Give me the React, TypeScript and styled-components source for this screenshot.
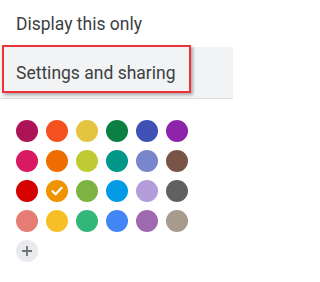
import React from 'react';
import styled, { createGlobalStyle } from 'styled-components';

const GlobalStyle = createGlobalStyle`
  body {
    margin: 0;
    background: #fff;
    font-family: Roboto, "Liberation Sans", Arial, sans-serif;
  }
`;

const Menu = styled.div`
  width: 233px;
  height: 282px;
  background: #fff;
  overflow: hidden;
`;

const MenuItem = styled.div<{ $active?: boolean; $height: number }>`
  position: relative;
  display: flex;
  align-items: center;
  height: ${(p) => p.$height}px;
  padding-left: 16px;
  font-size: 17.5px;
  color: #3c4043;
  background: ${(p) => (p.$active ? '#f1f3f4' : 'transparent')};
`;

const Callout = styled.div`
  position: absolute;
  left: 2px;
  top: -2px;
  width: 185px;
  height: 44px;
  border: 2px solid #ee3338;
  box-shadow: 2px 2px 3px rgba(0, 0, 0, 0.3);
  pointer-events: none;
`;

const Divider = styled.div`
  height: 1px;
  background: #dadce0;
`;

const Palette = styled.div`
  display: grid;
  grid-template-columns: repeat(6, 22px);
  gap: 8px;
  padding: 21px 0 0 16px;
`;

const Swatch = styled.div<{ $color: string }>`
  width: 22px;
  height: 22px;
  border-radius: 50%;
  background: ${(p) => p.$color};
  display: flex;
  align-items: center;
  justify-content: center;
`;

const AddButton = styled.div`
  width: 22px;
  height: 22px;
  border-radius: 50%;
  background: #e8eaed;
  display: flex;
  align-items: center;
  justify-content: center;
`;

const colors = [
  '#ad1457', '#f4511e', '#e4c441', '#0b8043', '#3f51b5', '#8e24aa',
  '#d81b60', '#ef6c00', '#c0ca33', '#009688', '#7986cb', '#795548',
  '#d50000', '#f09300', '#7cb342', '#039be5', '#b39ddb', '#616161',
  '#e67c73', '#f6bf26', '#33b679', '#4285f4', '#9e69af', '#a79b8e',
];

const SELECTED = 13;

export default function App() {
  return (
    <>
      <GlobalStyle />
      <Menu>
        <MenuItem $height={47}>Display this only</MenuItem>
        <MenuItem $height={51} $active>
          Settings and sharing
          <Callout />
        </MenuItem>
        <Divider />
        <Palette>
          {colors.map((c, i) => (
            <Swatch key={c} $color={c}>
              {i === SELECTED && (
                <svg width="14" height="14" viewBox="0 0 14 14">
                  <path d="M2.5 7.2 L5.6 10.2 L11.6 3.8" fill="none" stroke="#fff" strokeWidth="2.2" strokeLinecap="round" strokeLinejoin="round" />
                </svg>
              )}
            </Swatch>
          ))}
          <AddButton>
            <svg width="12" height="12" viewBox="0 0 12 12">
              <path d="M6 1 V11 M1 6 H11" stroke="#6f7378" strokeWidth="1.8" />
            </svg>
          </AddButton>
        </Palette>
      </Menu>
    </>
  );
}
